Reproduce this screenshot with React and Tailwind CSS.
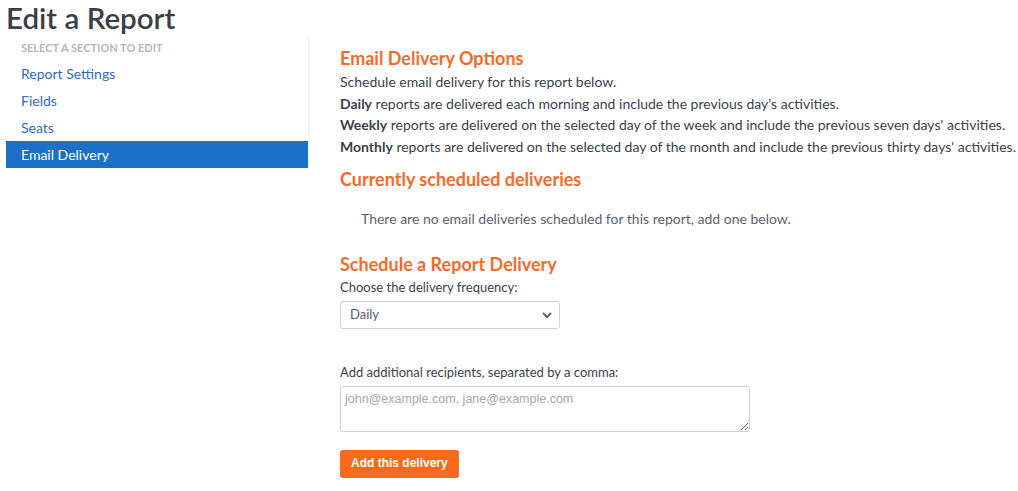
import React from 'react';

const navItems = ['Report Settings', 'Fields', 'Seats', 'Email Delivery'];

const App = () => {
  const active = 'Email Delivery';

  return (
    <div className="min-h-[491px] bg-white font-['Lato',sans-serif] text-[#3b3f4c]">
      <h1 className="px-[6px] text-[29.5px] leading-[35px] font-semibold text-[#3a3e48]">Edit a Report</h1>

      <div className="flex items-start">
        {/* Sidebar */}
        <div className="ml-[6px] mt-[1px] w-[303px] shrink-0 border-r border-[#eeeff2] pt-[5px]">
          <div className="px-[15px] text-[11px] leading-[13px] font-bold uppercase text-[#b3b6bf]">
            Select a section to edit
          </div>
          <ul className="mt-[6px]">
            {navItems.map((item) => (
              <li
                key={item}
                className={
                  item === active
                    ? 'h-[27px] px-[15px] text-[14px] leading-[27px] bg-[#1a6fc6] text-white'
                    : 'h-[27px] px-[15px] text-[14px] leading-[27px] text-[#2f6bc2]'
                }
              >
                {item}
              </li>
            ))}
          </ul>
        </div>

        {/* Main */}
        <div className="pl-[31px] pt-[10px] text-[14px] leading-[21.5px] whitespace-nowrap">
          <h2 className="text-[18px] leading-[26px] font-bold text-[#f46a2b]">Email Delivery Options</h2>
          <p>Schedule email delivery for this report below.</p>
          <p><b>Daily</b> reports are delivered each morning and include the previous day's activities.</p>
          <p><b>Weekly</b> reports are delivered on the selected day of the week and include the previous seven days' activities.</p>
          <p><b>Monthly</b> reports are delivered on the selected day of the month and include the previous thirty days' activities.</p>

          <h2 className="mt-[9px] text-[18px] leading-[26px] font-bold text-[#f46a2b]">Currently scheduled deliveries</h2>
          <p className="mt-[16px] pl-[21px] text-[#5d6271]">
            There are no email deliveries scheduled for this report, add one below.
          </p>

          <h2 className="mt-[21px] text-[18px] leading-[26px] font-bold text-[#f46a2b]">Schedule a Report Delivery</h2>
          <label className="block text-[13px] leading-[20px]">Choose the delivery frequency:</label>
          <div className="mt-[4px] flex h-[28px] w-[220px] items-center justify-between rounded-[3px] border border-[#cfd1d6] pl-[9px] pr-[6px] text-[13px] text-[#555a69]">
            <span>Daily</span>
            <svg width="12" height="12" viewBox="0 0 12 12" fill="none">
              <path d="M2.5 4.5 L6 8 L9.5 4.5" stroke="#5a5f6e" strokeWidth="1.8" strokeLinecap="round" strokeLinejoin="round" />
            </svg>
          </div>

          <label className="mt-[33px] block text-[13px] leading-[20px]">Add additional recipients, separated by a comma:</label>
          <textarea
            className="mt-[4px] block h-[46px] w-[410px] rounded-[3px] border border-[#cfd1d6] px-[4px] pt-[4px] font-['Liberation_Sans',sans-serif] text-[12.5px] leading-[16px] placeholder:text-[#a4a8b2]"
            placeholder="john@example.com, jane@example.com"
          />

          <button className="mt-[18px] h-[28px] rounded-[3px] bg-[#fb6a1c] px-[11px] font-['Liberation_Sans',sans-serif] text-[12px] font-bold text-white">
            Add this delivery
          </button>
        </div>
      </div>
    </div>
  );
};

export default App;
